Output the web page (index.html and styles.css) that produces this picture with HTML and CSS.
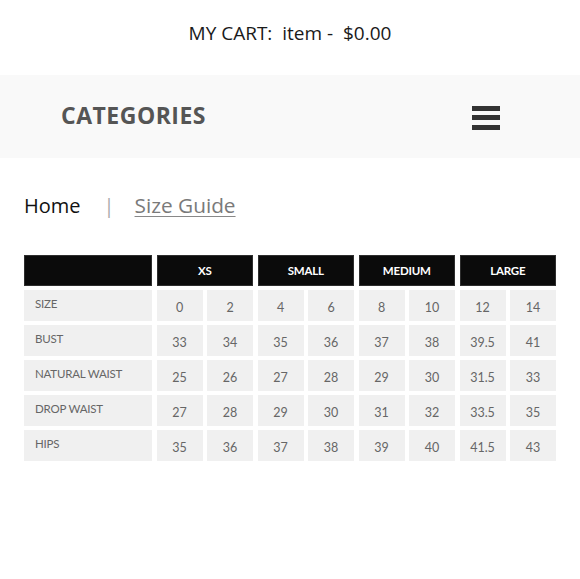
FILE: index.html
```html
<!DOCTYPE html>
<html>
<head>
<meta charset="utf-8">
<link rel="stylesheet" href="styles.css">
</head>
<body>
<div class="cart">MY CART:&nbsp; item -&nbsp; $0.00</div>
<div class="catbar">
  <span class="cat-title">CATEGORIES</span>
  <span class="burger"><i></i><i></i><i></i></span>
</div>
<div class="crumbs">
  <span class="home">Home</span>
  <span class="sep">|</span>
  <a class="current">Size Guide</a>
</div>
<div class="chart">
  <div class="hd"></div>
  <div class="hd span2">XS</div>
  <div class="hd span2">SMALL</div>
  <div class="hd span2">MEDIUM</div>
  <div class="hd span2">LARGE</div>

  <div class="lbl">SIZE</div>
  <div class="num">0</div><div class="num">2</div><div class="num">4</div><div class="num">6</div><div class="num">8</div><div class="num">10</div><div class="num">12</div><div class="num">14</div>

  <div class="lbl">BUST</div>
  <div class="num">33</div><div class="num">34</div><div class="num">35</div><div class="num">36</div><div class="num">37</div><div class="num">38</div><div class="num">39.5</div><div class="num">41</div>

  <div class="lbl">NATURAL WAIST</div>
  <div class="num">25</div><div class="num">26</div><div class="num">27</div><div class="num">28</div><div class="num">29</div><div class="num">30</div><div class="num">31.5</div><div class="num">33</div>

  <div class="lbl">DROP WAIST</div>
  <div class="num">27</div><div class="num">28</div><div class="num">29</div><div class="num">30</div><div class="num">31</div><div class="num">32</div><div class="num">33.5</div><div class="num">35</div>

  <div class="lbl">HIPS</div>
  <div class="num">35</div><div class="num">36</div><div class="num">37</div><div class="num">38</div><div class="num">39</div><div class="num">40</div><div class="num">41.5</div><div class="num">43</div>
</div>
</body>
</html>
```
FILE: styles.css
```css
html, body {
  margin: 0;
  padding: 0;
  background: #fff;
  font-family: "Open Sans", "Noto Sans", sans-serif;
}

.cart {
  height: 75px;
  box-sizing: border-box;
  padding-top: 20px;
  text-align: center;
  font-size: 19px;
  line-height: 26px;
  color: #1a1a1a;
}

.catbar {
  height: 83px;
  box-sizing: border-box;
  background: #f9f9f9;
  display: flex;
  align-items: center;
  justify-content: space-between;
  padding: 0 80px 0 61px;
}

.cat-title {
  font-size: 23px;
  font-weight: 700;
  line-height: 30px;
  letter-spacing: 0.5px;
  color: #555;
  margin-bottom: 3px;
}

.burger {
  display: flex;
  flex-direction: column;
  gap: 4.5px;
  width: 28px;
  margin-top: 2px;
}

.burger i {
  display: block;
  height: 5px;
  background: #333;
}

.crumbs {
  margin-top: 33px;
  padding-left: 24px;
  display: flex;
  align-items: baseline;
  font-size: 20px;
  line-height: 28px;
}

.home {
  color: #111;
}

.sep {
  color: #aaa;
  margin: 0 20px 0 23px;
}

.current {
  color: #7a7a7a;
  font-size: 20.8px;
  text-decoration: underline;
  text-decoration-color: #888;
  text-underline-offset: 3px;
  text-decoration-thickness: 1px;
}

.chart {
  margin: 34.5px 0 0 24px;
  width: 532px;
  display: grid;
  grid-template-columns: 128px repeat(8, 46px);
  grid-template-rows: 31px repeat(5, 30.5px);
  column-gap: 4.5px;
  row-gap: 4.5px;
  font-family: "Lato", "Noto Sans", sans-serif;
}

.hd {
  background: #0b0b0b;
  box-shadow: inset 0 0 0 1px #2e2e2e;
  color: #fff;
  font-size: 11.5px;
  font-weight: 700;
  display: flex;
  align-items: center;
  justify-content: center;
  letter-spacing: -0.2px;
}

.span2 {
  grid-column: span 2;
}

.lbl {
  background: #f0f0f0;
  color: #666;
  font-size: 11.5px;
  display: flex;
  align-items: center;
  padding: 0 0 3px 11px;
  letter-spacing: -0.2px;
}

.num {
  background: #f0f0f0;
  color: #666;
  font-size: 12.5px;
  display: flex;
  align-items: center;
  justify-content: center;
  padding-top: 4px;
  box-sizing: border-box;
}
```
